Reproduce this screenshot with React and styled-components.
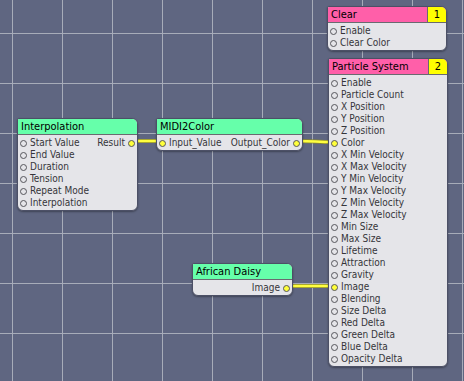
import React from "react";
import styled, { createGlobalStyle } from "styled-components";

const Global = createGlobalStyle`
  html, body { margin: 0; padding: 0; }
  body { width: 464px; height: 381px; overflow: hidden; font-family: "DejaVu Sans Condensed", "DejaVu Sans", sans-serif; }
`;

const Canvas = styled.div`
  position: relative;
  width: 464px;
  height: 381px;
  overflow: hidden;
  background-color: #5f6681;
  background-image:
    linear-gradient(to right, #a7acb9 1px, transparent 1px),
    linear-gradient(to bottom, #a7acb9 1px, transparent 1px);
  background-size: 50px 50px;
  background-position: 12px 33px;
`;

const Wires = styled.svg`
  position: absolute;
  left: 0;
  top: 0;
  width: 464px;
  height: 381px;
`;

const Node = styled.div`
  position: absolute;
  box-sizing: border-box;
  background: #e5e5e9;
  border: 1px solid #4c5066;
  border-radius: 2px 6px 6px 6px;
  overflow: hidden;
  box-shadow: 0 1px 2px rgba(0, 0, 0, 0.35);
`;

const Header = styled.div`
  display: flex;
  align-items: stretch;
  height: 15px;
  background: ${(p) => (p.$kind === "consumer" ? "#ff5fa9" : "#66ffaa")};
  border-bottom: 1px solid #6a6a70;
`;

const Title = styled.div`
  flex: 1;
  padding-left: 3px;
  font-size: 11px;
  line-height: 15px;
  color: #000;
  white-space: nowrap;
`;

const Badge = styled.div`
  width: 18px;
  background: #ffff00;
  border-left: 1px solid #6a6a70;
  font-size: 11px;
  line-height: 15px;
  text-align: center;
  color: #000;
`;

const Body = styled.div`
  display: flex;
  justify-content: space-between;
  padding: 2px 0 1px;
`;

const Column = styled.div`
  display: flex;
  flex-direction: column;
  align-items: ${(p) => (p.$out ? "flex-end" : "flex-start")};
`;

const Port = styled.div`
  display: flex;
  align-items: center;
  flex-direction: ${(p) => (p.$out ? "row-reverse" : "row")};
  gap: 3px;
  height: 12px;
  padding: 0 2px;
  font-size: 10px;
  line-height: 12px;
  color: #35353a;
  white-space: nowrap;
`;

const Dot = styled.span`
  box-sizing: border-box;
  width: 7px;
  height: 7px;
  border-radius: 50%;
  border: 1px solid #56565c;
  background: ${(p) => (p.$on ? "#ffff3a" : "#e5e5e9")};
  flex: none;
`;

const nodes = [
  { id: "clear", title: "Clear", kind: "consumer", badge: "1", x: 327, y: 6, w: 120,
    inputs: ["Enable", "Clear Color"], outputs: [] },
  { id: "ps", title: "Particle System", kind: "consumer", badge: "2", x: 328, y: 58, w: 120,
    inputs: ["Enable", "Particle Count", "X Position", "Y Position", "Z Position", "Color",
      "X Min Velocity", "X Max Velocity", "Y Min Velocity", "Y Max Velocity", "Z Min Velocity",
      "Z Max Velocity", "Min Size", "Max Size", "Lifetime", "Attraction", "Gravity", "Image",
      "Blending", "Size Delta", "Red Delta", "Green Delta", "Blue Delta", "Opacity Delta"],
    on: ["Color", "Image"], outputs: [] },
  { id: "interp", title: "Interpolation", kind: "processor", x: 17, y: 118, w: 121,
    inputs: ["Start Value", "End Value", "Duration", "Tension", "Repeat Mode", "Interpolation"],
    outputs: ["Result"], on: ["Result"] },
  { id: "midi", title: "MIDI2Color", kind: "processor", x: 156, y: 118, w: 147,
    inputs: ["Input_Value"], outputs: ["Output_Color"], on: ["Input_Value", "Output_Color"] },
  { id: "daisy", title: "African Daisy", kind: "processor", x: 192, y: 263, w: 101,
    inputs: [], outputs: ["Image"], on: ["Image"] },
];

const wires = [
  [132, 141, 161, 141],
  [297, 141, 334, 142],
  [287, 286, 334, 286],
];

function GraphNode({ n }) {
  const on = n.on || [];
  return (
    <Node style={{ left: n.x, top: n.y, width: n.w }}>
      <Header $kind={n.kind}>
        <Title>{n.title}</Title>
        {n.badge && <Badge>{n.badge}</Badge>}
      </Header>
      <Body>
        <Column>
          {n.inputs.map((p) => (
            <Port key={p}>
              <Dot $on={on.includes(p)} />
              {p}
            </Port>
          ))}
        </Column>
        <Column $out>
          {n.outputs.map((p) => (
            <Port key={p} $out>
              <Dot $on={on.includes(p)} />
              {p}
            </Port>
          ))}
        </Column>
      </Body>
    </Node>
  );
}

export default function App() {
  return (
    <>
      <Global />
      <Canvas>
        <Wires viewBox="0 0 464 381">
          {wires.map(([x1, y1, x2, y2], i) => {
            const mx = (x1 + x2) / 2;
            const d = `M${x1} ${y1} C${mx} ${y1} ${mx} ${y2} ${x2} ${y2}`;
            return (
              <g key={i}>
                <path d={d} stroke="#8d8a2a" strokeWidth="4" fill="none" />
                <path d={d} stroke="#ffff40" strokeWidth="2.5" fill="none" />
              </g>
            );
          })}
        </Wires>
        {nodes.map((n) => (
          <GraphNode key={n.id} n={n} />
        ))}
      </Canvas>
    </>
  );
}
